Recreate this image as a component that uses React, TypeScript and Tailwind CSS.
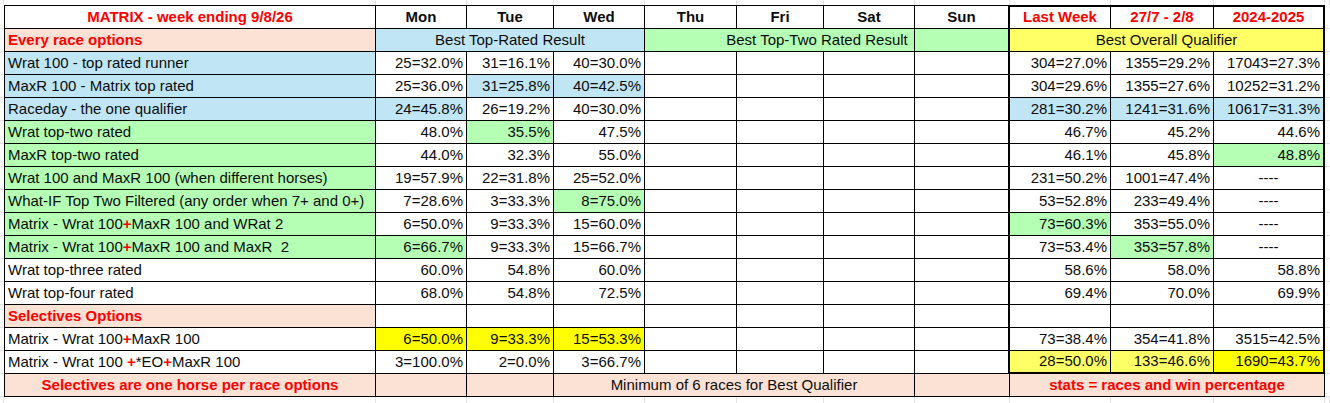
import React from 'react';

const BLUE = 'bg-[#C0E6F5]';
const GREEN = 'bg-[#B4FFB4]';
const PEACH = 'bg-[#FBE2D5]';
const YEL = 'bg-[#FFFF00]';
const LYEL = 'bg-[#FFFF66]';

type Val = [string, string?];

interface CellProps {
  children?: React.ReactNode;
  className?: string;
  a?: 'l' | 'r' | 'c';
  span?: 3 | 4;
}

const Cell: React.FC<CellProps> = ({ children, className = '', a = 'r', span }) => {
  const just = a === 'l' ? 'justify-start' : a === 'c' ? 'justify-center' : 'justify-end';
  const sp = span === 3 ? 'col-span-3' : span === 4 ? 'col-span-4' : '';
  return (
    <div
      className={`flex items-center h-[23px] border-r border-b border-black px-[3px] whitespace-pre overflow-hidden ${just} ${sp} ${className}`}
    >
      {children}
    </div>
  );
};

const Margin: React.FC<{ className?: string }> = ({ className = '' }) => (
  <div className={`border-b border-[#e3e3e3] ${className}`} />
);

const P = <span className="text-[#FF0000] font-bold">+</span>;

interface Row {
  label: React.ReactNode;
  lbg: string;
  days: Val[];
  stats: Val[];
}

const rows: Row[] = [
  { label: 'Wrat 100 - top rated runner', lbg: BLUE, days: [['25=32.0%'], ['31=16.1%'], ['40=30.0%']], stats: [['304=27.0%'], ['1355=29.2%'], ['17043=27.3%']] },
  { label: 'MaxR 100 - Matrix top rated', lbg: BLUE, days: [['25=36.0%'], ['31=25.8%', BLUE], ['40=42.5%', BLUE]], stats: [['304=29.6%'], ['1355=27.6%'], ['10252=31.2%']] },
  { label: 'Raceday - the one qualifier', lbg: BLUE, days: [['24=45.8%', BLUE], ['26=19.2%'], ['40=30.0%']], stats: [['281=30.2%', BLUE], ['1241=31.6%', BLUE], ['10617=31.3%', BLUE]] },
  { label: 'Wrat top-two rated', lbg: GREEN, days: [['48.0%'], ['35.5%', GREEN], ['47.5%']], stats: [['46.7%'], ['45.2%'], ['44.6%']] },
  { label: 'MaxR top-two rated', lbg: GREEN, days: [['44.0%'], ['32.3%'], ['55.0%']], stats: [['46.1%'], ['45.8%'], ['48.8%', GREEN]] },
  { label: 'Wrat 100 and MaxR 100 (when different horses)', lbg: GREEN, days: [['19=57.9%'], ['22=31.8%'], ['25=52.0%']], stats: [['231=50.2%'], ['1001=47.4%'], ['----']] },
  { label: 'What-IF Top Two Filtered (any order when 7+ and 0+)', lbg: GREEN, days: [['7=28.6%'], ['3=33.3%'], ['8=75.0%', GREEN]], stats: [['53=52.8%'], ['233=49.4%'], ['----']] },
  { label: <>Matrix - Wrat 100{P}MaxR 100 and WRat 2</>, lbg: GREEN, days: [['6=50.0%'], ['9=33.3%'], ['15=60.0%']], stats: [['73=60.3%', GREEN], ['353=55.0%'], ['----']] },
  { label: <>Matrix - Wrat 100{P}MaxR 100 and MaxR  2</>, lbg: GREEN, days: [['6=66.7%', GREEN], ['9=33.3%'], ['15=66.7%']], stats: [['73=53.4%'], ['353=57.8%', GREEN], ['----']] },
  { label: 'Wrat top-three rated', lbg: '', days: [['60.0%'], ['54.8%'], ['60.0%']], stats: [['58.6%'], ['58.0%'], ['58.8%']] },
  { label: 'Wrat top-four rated', lbg: '', days: [['68.0%'], ['54.8%'], ['72.5%']], stats: [['69.4%'], ['70.0%'], ['69.9%']] },
];

const selectives: Row[] = [
  { label: <>Matrix - Wrat 100{P}MaxR 100</>, lbg: '', days: [['6=50.0%', YEL], ['9=33.3%', YEL], ['15=53.3%', YEL]], stats: [['73=38.4%'], ['354=41.8%'], ['3515=42.5%']] },
  { label: <>Matrix - Wrat 100 {P}*EO{P}MaxR 100</>, lbg: '', days: [['3=100.0%'], ['2=0.0%'], ['3=66.7%']], stats: [['28=50.0%', LYEL], ['133=46.6%', LYEL], ['1690=43.7%', YEL]] },
];

const DataRow: React.FC<{ r: Row; last?: boolean }> = ({ r, last }) => (
  <>
    <Margin />
    <Cell a="l" className={`border-l ${r.lbg}`}>{r.label}</Cell>
    {r.days.map(([t, bg], i) => (
      <Cell key={i} className={bg ?? ''}>{t}</Cell>
    ))}
    <Cell />
    <Cell />
    <Cell />
    <Cell className="border-r-2" />
    {r.stats.map(([t, bg], i) => (
      <Cell
        key={i}
        a={t === '----' ? 'c' : 'r'}
        className={`${bg ?? ''} ${i === 2 ? 'border-r-2' : ''} ${last ? 'border-b-2' : ''}`}
      >
        {t}
      </Cell>
    ))}
    <Margin />
  </>
);

export default function App() {
  const top = Array.from({ length: 13 });
  return (
    <div className="w-[1330px] h-[403px] bg-white overflow-hidden text-[15px] text-[#0c0c0c] font-['Liberation_Sans',Arial,sans-serif]">
      <div className="grid grid-cols-[4px_372px_91px_87px_91px_92px_87px_91px_95px_101px_103px_111px_5px]">
        {top.map((_, i) => (
          <div key={i} className="h-[5px] border-r border-[#e3e3e3]" />
        ))}

        {/* header */}
        <Margin className="h-[24px]" />
        <Cell a="c" className="h-[24px] border-t border-l font-bold text-[#FF0000]">MATRIX - week ending 9/8/26</Cell>
        {['Mon', 'Tue', 'Wed', 'Thu', 'Fri', 'Sat'].map((d) => (
          <Cell key={d} a="c" className="h-[24px] border-t font-bold">{d}</Cell>
        ))}
        <Cell a="c" className="h-[24px] border-t border-r-2 font-bold">Sun</Cell>
        <Cell a="c" className="h-[24px] border-t-2 font-bold text-[#FF0000]">Last Week</Cell>
        <Cell a="c" className="h-[24px] border-t-2 font-bold text-[#FF0000]">27/7 - 2/8</Cell>
        <Cell a="c" className="h-[24px] border-t-2 border-r-2 font-bold text-[#FF0000]">2024-2025</Cell>
        <Margin className="h-[24px]" />

        {/* every race options */}
        <Margin />
        <Cell a="l" className={`border-l font-bold text-[#FF0000] ${PEACH}`}>Every race options</Cell>
        <Cell a="c" span={3} className={BLUE}>Best Top-Rated Result</Cell>
        <Cell a="c" span={3} className={`pl-[78px] ${GREEN}`}>Best Top-Two Rated Result</Cell>
        <Cell className={`border-r-2 ${GREEN}`} />
        <Cell a="c" span={3} className={`border-r-2 ${LYEL}`}>Best Overall Qualifier</Cell>
        <Margin />

        {rows.map((r, i) => (
          <DataRow key={i} r={r} />
        ))}

        {/* selectives options */}
        <Margin />
        <Cell a="l" className={`border-l font-bold text-[#FF0000] ${PEACH}`}>Selectives Options</Cell>
        <Cell />
        <Cell />
        <Cell />
        <Cell />
        <Cell />
        <Cell />
        <Cell className="border-r-2" />
        <Cell />
        <Cell />
        <Cell className="border-r-2" />
        <Margin />

        {selectives.map((r, i) => (
          <DataRow key={i} r={r} last={i === selectives.length - 1} />
        ))}

        {/* footer */}
        <Margin />
        <Cell a="c" className={`border-l font-bold text-[#FF0000] ${PEACH}`}>Selectives are one horse per race options</Cell>
        <Cell className={PEACH} />
        <Cell className={PEACH} />
        <Cell a="c" span={4} className={PEACH}>Minimum of 6 races for Best Qualifier</Cell>
        <Cell className={PEACH} />
        <Cell a="c" span={3} className={`font-bold text-[#FF0000] ${PEACH}`}>stats = races and win percentage</Cell>
        <Margin />

        {top.map((_, i) => (
          <div key={i} className="h-[6px] border-r border-[#e3e3e3]" />
        ))}
      </div>
    </div>
  );
}
